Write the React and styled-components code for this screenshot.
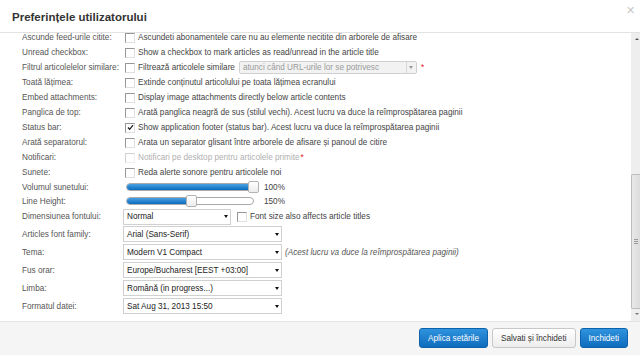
import React from "react";
import styled, { createGlobalStyle, css } from "styled-components";

const Global = createGlobalStyle`
  html, body { margin: 0; padding: 0; background: #fff; }
  body { font-family: "Liberation Sans", Arial, sans-serif; }
`;

const Dialog = styled.div`
  width: 640px;
  height: 355px;
  display: flex;
  flex-direction: column;
  overflow: hidden;
  background: #fff;
`;

const Header = styled.div`
  height: 32px;
  flex: none;
  display: flex;
  align-items: center;
  justify-content: space-between;
  padding: 0 5px 0 12px;
  border-bottom: 1px solid #e2e2e2;
`;

const Title = styled.h3`
  margin: 0;
  font-size: 11.5px;
  font-weight: bold;
  color: #333;
  padding-top: 1px;
`;

const Close = styled.span`
  font-size: 11px;
  color: #c8c8c8;
  align-self: flex-start;
  margin-top: 4px;
`;

const Body = styled.div`
  flex: 1;
  display: flex;
  min-height: 0;
`;

const Scroller = styled.div`
  flex: 1;
  overflow: hidden;
`;

const Form = styled.div`
  margin-top: -3px;
  padding-left: 22px;
  display: flex;
  flex-direction: column;
`;

const Row = styled.div`
  display: flex;
  align-items: center;
  height: ${(p) => p.$h || 15}px;
  font-size: 8.2px;
`;

const Label = styled.div`
  width: 101px;
  flex: none;
  color: #555;
  white-space: nowrap;
`;

const Control = styled.div`
  display: flex;
  align-items: center;
  color: ${(p) => (p.$disabled ? "#b0b0b0" : "#444")};
  white-space: nowrap;
`;

const Box = styled.span`
  width: 10px;
  height: 10px;
  box-sizing: border-box;
  flex: none;
  margin: 0 3px 0 ${(p) => p.$ml ?? 2}px;
  border: 1px solid;
  border-color: ${(p) =>
    p.$disabled ? "#d0d0d0 #f0f0f0 #f0f0f0 #d0d0d0" : "#969696 #e0e0e0 #e0e0e0 #969696"};
  background: #fff;
  display: flex;
  align-items: center;
  justify-content: center;
`;

const Star = styled.span`
  color: #e02020;
  margin-left: ${(p) => p.$ml ?? 1}px;
`;

const Check = ({ checked, disabled, ml }) => (
  <Box $disabled={disabled} $ml={ml}>
    {checked && (
      <svg width="7" height="7" viewBox="0 0 7 7">
        <path d="M1 3.5 L2.7 5.3 L6 1.2" stroke="#222" strokeWidth="1.3" fill="none" />
      </svg>
    )}
  </Box>
);

const Caret = styled.span`
  width: 0;
  height: 0;
  border-left: 2.5px solid transparent;
  border-right: 2.5px solid transparent;
  border-top: 3px solid ${(p) => (p.$disabled ? "#999" : "#111")};
`;

const SelectBox = styled.div`
  box-sizing: border-box;
  width: ${(p) => p.$w}px;
  height: ${(p) => p.$hgt || 16}px;
  border: 1px solid #d0d0d0;
  background: ${(p) => (p.$disabled ? "#f2f2f2" : "#fff")};
  color: ${(p) => (p.$disabled ? "#9a9a9a" : "#222")};
  font-size: 8.2px;
  display: flex;
  align-items: center;
  justify-content: space-between;
  padding-left: 3px;
  ${(p) =>
    p.$disabled &&
    css`
      margin-left: 4px;
      border-radius: 2px;
    `}
`;

const CaretCell = styled.span`
  display: flex;
  align-items: center;
  justify-content: center;
  width: 9px;
  height: 100%;
  ${(p) =>
    p.$sep &&
    css`
      border-left: 1px solid #d8d8d8;
    `}
`;

const Select = ({ w, value, disabled, h }) => (
  <SelectBox $w={w} $disabled={disabled} $hgt={h}>
    <span>{value}</span>
    <CaretCell $sep={disabled}>
      <Caret $disabled={disabled} />
    </CaretCell>
  </SelectBox>
);

const Track = styled.div`
  position: relative;
  width: 128px;
  height: 8px;
  box-sizing: border-box;
  margin-left: 3px;
  border: 1px solid #a9a9a9;
  border-radius: 4px;
  background: #fff;
`;

const Fill = styled.div`
  height: 100%;
  border-radius: 4px 0 0 4px;
  background: linear-gradient(#4aa1e2, #0b6cbf);
`;

const Handle = styled.div`
  position: absolute;
  top: -3px;
  width: 11px;
  height: 12px;
  box-sizing: border-box;
  margin-left: -5.5px;
  border: 1px solid #b3b3b3;
  border-radius: 2px;
  background: linear-gradient(#fff, #ececec);
`;

const Pct = styled.span`
  margin-left: 10px;
  color: #444;
`;

const Slider = ({ frac, text }) => (
  <Control>
    <Track>
      <Fill style={{ width: `${frac * 100}%` }} />
      <Handle style={{ left: `${frac * 100}%` }} />
    </Track>
    <Pct>{text}</Pct>
  </Control>
);

const Note = styled.span`
  font-style: italic;
  color: #555;
  margin-left: 3px;
`;

const ScrollTrack = styled.div`
  width: 9px;
  flex: none;
  background: #eeeeee;
  display: flex;
  flex-direction: column;
  align-items: flex-end;
`;

const Arrow = styled.span`
  width: 0;
  height: 0;
  margin: ${(p) => (p.$down ? "4px 1px 6px 0" : "5px 1px 0 0")};
  border-left: 2.5px solid transparent;
  border-right: 2.5px solid transparent;
  ${(p) =>
    p.$down
      ? css`border-top: 2.5px solid #777;`
      : css`border-bottom: 2.5px solid #555;`}
`;

const ScrollSpace = styled.div`
  flex: 1;
  width: 100%;
  display: flex;
  flex-direction: column;
  justify-content: flex-end;
`;

const Thumb = styled.div`
  height: 135px;
  box-sizing: border-box;
  border: 1px solid #bdbdbd;
  border-right: none;
  border-radius: 2px 0 0 2px;
  background: linear-gradient(90deg, #e9e9e9, #dcdcdc);
  display: flex;
  align-items: center;
  justify-content: center;
`;

const Grip = styled.span`
  width: 4px;
  height: 6px;
  background: repeating-linear-gradient(#9a9a9a 0 1px, transparent 1px 2px);
`;

const Footer = styled.div`
  flex: none;
  height: 27px;
  border-top: 1px solid #e3e3e3;
  background: #f5f5f5;
  display: flex;
  justify-content: flex-end;
  align-items: flex-start;
  gap: 4px;
  padding: 6px 12px 0 0;
`;

const Button = styled.button`
  height: 20px;
  padding: 0 8px;
  font-family: "Liberation Sans", Arial, sans-serif;
  font-size: 8.2px;
  border-radius: 3px;
  border: 1px solid ${(p) => (p.$primary ? "#0d62ad" : "#c8c8c8")};
  color: ${(p) => (p.$primary ? "#fff" : "#333")};
  background: ${(p) =>
    p.$primary
      ? "linear-gradient(#2f93de, #0f6cbd)"
      : "linear-gradient(#fff, #ededed)"};
`;

const checks = [
  ["Ascunde feed-urile citite:", "Ascundeti abonamentele care nu au elemente necitite din arborele de afisare"],
  ["Unread checkbox:", "Show a checkbox to mark articles as read/unread in the article title"],
  ["Filtrul articolelelor similare:", "Filtrează articolele similare", "filter"],
  ["Toată lățimea:", "Extinde conținutul articolului pe toata lățimea ecranului"],
  ["Embed attachments:", "Display image attachments directly below article contents"],
  ["Panglica de top:", "Arată panglica neagră de sus (stilul vechi). Acest lucru va duce la reîmprospătarea paginii"],
  ["Status bar:", "Show application footer (status bar). Acest lucru va duce la reîmprospătarea paginii", "checked"],
  ["Arată separatorul:", "Arata un separator glisant între arborele de afisare și panoul de citire"],
  ["Notificari:", "Notificari pe desktop pentru articolele primite", "disabled"],
  ["Sunete:", "Reda alerte sonore pentru articolele noi"],
];

const selects = [
  ["Articles font family:", "Arial (Sans-Serif)"],
  ["Tema:", "Modern V1 Compact", "(Acest lucru va duce la reîmprospătarea paginii)"],
  ["Fus orar:", "Europe/Bucharest [EEST +03:00]"],
  ["Limba:", "Română (in progress...)"],
  ["Formatul datei:", "Sat Aug 31, 2013 15:50"],
];

export default function App() {
  return (
    <>
      <Global />
      <Dialog>
        <Header>
          <Title>Preferințele utilizatorului</Title>
          <Close>✕</Close>
        </Header>
        <Body>
          <Scroller>
            <Form>
              {checks.map(([label, text, kind]) => (
                <Row key={label}>
                  <Label>{label}</Label>
                  <Control $disabled={kind === "disabled"}>
                    <Check checked={kind === "checked"} disabled={kind === "disabled"} />
                    {text}
                    {kind === "filter" && (
                      <>
                        <Select w={178} h={13} value="atunci când URL-urile lor se potrivesc" disabled />
                        <Star $ml={4}>*</Star>
                      </>
                    )}
                    {kind === "disabled" && <Star>*</Star>}
                  </Control>
                </Row>
              ))}
              <Row $h={14}>
                <Label>Volumul sunetului:</Label>
                <Slider frac={1} text="100%" />
              </Row>
              <Row $h={14}>
                <Label>Line Height:</Label>
                <Slider frac={0.51} text="150%" />
              </Row>
              <Row $h={17}>
                <Label>Dimensiunea fontului:</Label>
                <Control>
                  <Select w={108} value="Normal" />
                  <Check ml={6} />
                  Font size also affects article titles
                </Control>
              </Row>
              {selects.map(([label, value, note]) => (
                <Row key={label} $h={18}>
                  <Label>{label}</Label>
                  <Control>
                    <Select w={159} value={value} />
                    {note && <Note>{note}</Note>}
                  </Control>
                </Row>
              ))}
            </Form>
          </Scroller>
          <ScrollTrack>
            <Arrow />
            <ScrollSpace>
              <Thumb>
                <Grip />
              </Thumb>
            </ScrollSpace>
            <Arrow $down />
          </ScrollTrack>
        </Body>
        <Footer>
          <Button $primary>Aplica setările</Button>
          <Button>Salvati și închideti</Button>
          <Button $primary>Inchideti</Button>
        </Footer>
      </Dialog>
    </>
  );
}
